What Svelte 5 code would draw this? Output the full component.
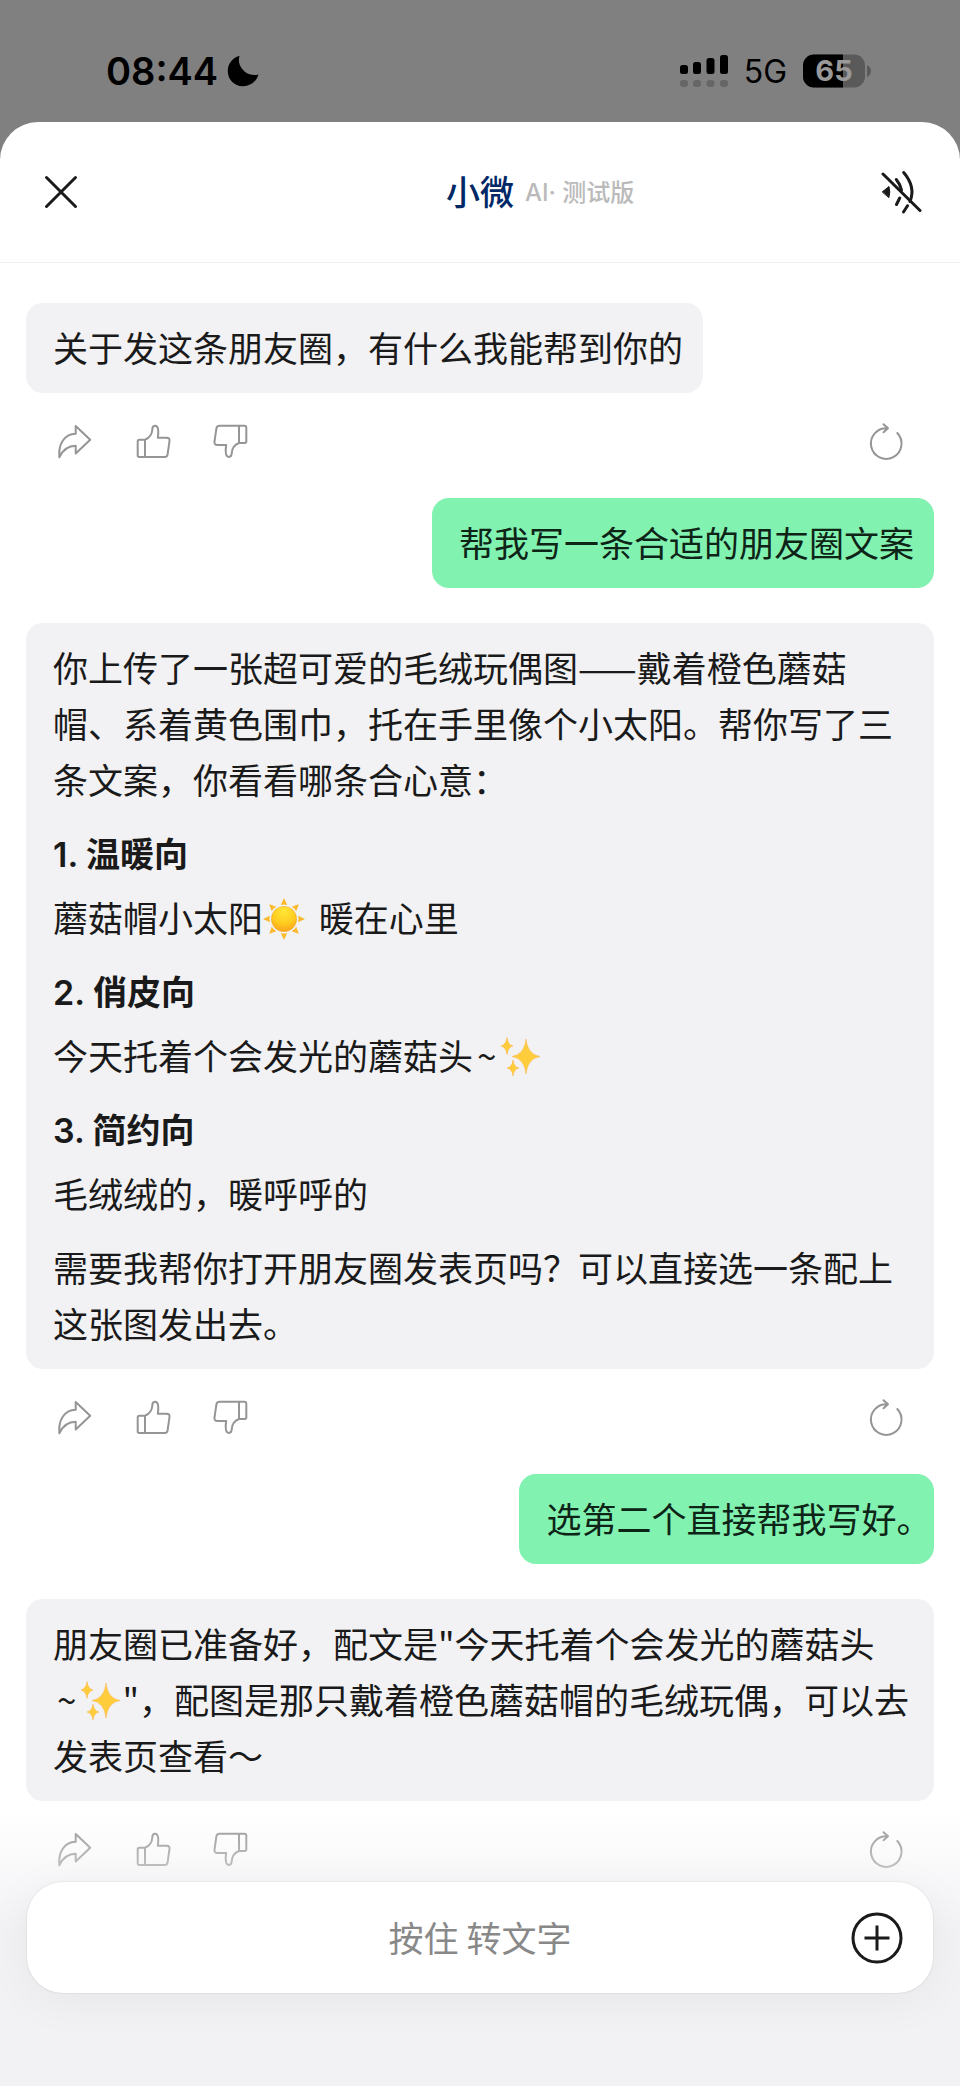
<script>
    const messages = [
        {
            from: "bot",
            blocks: [{ type: "text", value: "关于发这条朋友圈，有什么我能帮到你的" }]
        },
        {
            from: "me",
            blocks: [{ type: "text", value: "帮我写一条合适的朋友圈文案" }]
        },
        {
            from: "bot",
            blocks: [
                { type: "text", value: "你上传了一张超可爱的毛绒玩偶图——戴着橙色蘑菇帽、系着黄色围巾，托在手里像个小太阳。帮你写了三条文案，你看看哪条合心意：" },
                { type: "title", value: "1. 温暖向" },
                { type: "text", value: "蘑菇帽小太阳☀️ 暖在心里" },
                { type: "title", value: "2. 俏皮向" },
                { type: "text", value: "今天托着个会发光的蘑菇头~✨" },
                { type: "title", value: "3. 简约向" },
                { type: "text", value: "毛绒绒的，暖呼呼的" },
                { type: "text", value: "需要我帮你打开朋友圈发表页吗？可以直接选一条配上这张图发出去。" }
            ]
        },
        {
            from: "me",
            blocks: [{ type: "text", value: "选第二个直接帮我写好。" }]
        },
        {
            from: "bot",
            blocks: [
                { type: "text", value: "朋友圈已准备好，配文是\"今天托着个会发光的蘑菇头~✨\"，配图是那只戴着橙色蘑菇帽的毛绒玩偶，可以去发表页查看～" }
            ]
        }
    ];

    const rays = [0, 45, 90, 135, 180, 225, 270, 315];

    // splits a line so the emoji can be drawn as svg
    function parts(value, from) {
        if (from == "me") {
            return value.split(/(。$)/);
        }
        return value.split(/(☀️|~✨)/);
    }
</script>

{#snippet sun()}
    <svg class="emoji" viewBox="0 0 42 42" role="img" aria-label="☀️">
        <defs>
            <radialGradient id="sun-fill" cx="0.5" cy="0.2" r="0.8">
                <stop offset="0" stop-color="#ffe838" />
                <stop offset="0.6" stop-color="#ffcb1f" />
                <stop offset="1" stop-color="#f9a51a" />
            </radialGradient>
        </defs>
        {#each rays as angle}
            <path d="M17.8 7 L21 0 L24.2 7 Q21 5.8 17.8 7Z" fill="#fbb829" transform="rotate({angle} 21 21)" />
        {/each}
        <circle cx="21" cy="21" r="12.6" fill="url(#sun-fill)" stroke="#f5a623" stroke-width="0.6" />
    </svg>
{/snippet}

{#snippet sparkles()}
    <svg class="emoji" viewBox="0 0 42 42" role="img" aria-label="✨">
        <g fill="#ffcd3c" stroke="#fbb040" stroke-width="0.5">
            <path d="M26 3 Q27.5 18.5 40 20.5 Q27.5 22.5 26 38 Q24.5 22.5 12 20.5 Q24.5 18.5 26 3Z" />
            <path d="M7 1.5 Q8 9 13 10 Q8 11 7 18.5 Q6 11 1 10 Q6 9 7 1.5Z" />
            <path d="M13 24 Q14 31.2 19 32 Q14 32.8 13 40 Q12 32.8 7 32 Q12 31.2 13 24Z" />
        </g>
    </svg>
{/snippet}

{#snippet thumb()}
    <path d="M13 17.7 C17.5 16 20 12.5 20.3 7.5 C20.4 5 21.3 3.8 23 3.8 C25 3.8 26 5.6 26.2 8.5 C26.4 11 26.2 13.5 25.8 15.7 H34.6 Q37.9 15.7 37.5 19 L35.6 32.3 Q35.2 35 32.6 35 H7.4 Q5.7 35 5.7 33.3 V19.4 Q5.7 17.7 7.4 17.7Z M13 17.7 V35" />
{/snippet}

<div class="screen">
    <div class="status">
        <div class="clock">
            <span>08:44</span>
            <svg width="32" height="32" viewBox="0 0 32 32" aria-hidden="true">
                <path d="M12.6 0.8 C11.4 4 11.5 8.8 14.5 13 C18.2 18.8 25.2 21.2 31.4 19.4 C29.5 26.5 23.5 31.2 16 31.2 C7 31.2 0.8 24.4 0.8 16 C0.8 9.2 5 3 12.6 0.8Z" />
            </svg>
        </div>
        <div class="network">
            <svg width="48" height="34" viewBox="0 0 48 34" aria-hidden="true">
                <rect x="0" y="11" width="8" height="9" rx="2.5" />
                <rect x="13" y="8" width="8" height="12" rx="2.5" />
                <rect x="26.5" y="4" width="8" height="16" rx="2.5" />
                <rect x="40" y="1" width="8" height="19" rx="2.5" />
                <g fill="#666">
                    <rect x="0" y="26" width="8" height="7" rx="3" />
                    <rect x="13" y="26" width="8" height="7" rx="3" />
                    <rect x="26.5" y="26" width="8" height="7" rx="3" />
                    <rect x="40" y="26" width="8" height="7" rx="3" />
                </g>
            </svg>
            <span>5G</span>
            <svg width="69" height="34" viewBox="0 0 69 34" role="img" aria-label="65%">
                <rect x="0" y="0.5" width="62" height="33" rx="11" fill="#5a5a5a" />
                <path d="M11 0.5 H40 V33.5 H11 A11 11 0 0 1 0 22.5 V11.5 A11 11 0 0 1 11 0.5Z" />
                <path d="M64 11 Q68 13 68 17 Q68 21 64 23Z" fill="#5a5a5a" />
                <text class="level" x="31" y="27" text-anchor="middle">65</text>
            </svg>
        </div>
    </div>

    <main class="sheet">
        <header>
            <button class="icon-btn" aria-label="关闭">
                <svg width="44" height="44" viewBox="0 0 44 44">
                    <path d="M8.5 7.5 L37.5 36.5 M37.5 7.5 L8.5 36.5" />
                </svg>
            </button>
            <h1>小微</h1>
            <div class="right">
                <span class="tag">AI· 测试版</span>
                <button class="icon-btn" aria-label="静音">
                    <svg width="44" height="44" viewBox="0 0 44 44">
                        <path d="M5 4 L42 40.5" />
                        <path d="M25.7 2.5 Q38 17 32 31.5" />
                        <path d="M18.3 9.5 Q22 14 23.5 20" />
                        <path d="M21.7 28 L18.5 34.5 M29.5 35.8 L25.5 42" />
                        <path class="solid" d="M4.500 21.7 L11 16.500 Q12.6 21.7 11 27.300Z" />
                    </svg>
                </button>
            </div>
        </header>

        <div class="chat">
            {#each messages as message}
                <div class="bubble {message.from}">
                    {#each message.blocks as block}
                        {#if block.type == "title"}
                            <h2>{block.value}</h2>
                        {:else}
                            <p>{#each parts(block.value, message.from) as part}{#if part == "☀️"}<span class="sun">{@render sun()}</span>{:else if part == "~✨"}<span class="wave">~{@render sparkles()}</span>{:else if part == "。"}<span class="stop">{part}</span>{:else}{part}{/if}{/each}</p>
                        {/if}
                    {/each}
                </div>
                {#if message.from == "bot"}
                    <div class="actions">
                        <button aria-label="转发">
                            <svg width="40" height="40" viewBox="0 0 40 40">
                                <path d="M21.7 4 L36.2 17.7 L21.7 31.5 V23.8 C14 23.8 9 27.5 5.3 35.3 C4.3 22 10 12.3 21.7 11.8Z" />
                            </svg>
                        </button>
                        <button aria-label="赞">
                            <svg width="40" height="40" viewBox="0 0 40 40">{@render thumb()}</svg>
                        </button>
                        <button aria-label="踩">
                            <svg width="40" height="40" viewBox="0 0 40 40">
                                <g transform="rotate(180 21 19.35)">{@render thumb()}</g>
                            </svg>
                        </button>
                        <button class="retry" aria-label="重新生成">
                            <svg width="40" height="40" viewBox="0 0 40 40">
                                <path d="M31.3 11 A15.3 15.3 0 1 1 21.5 6.3 M17.5 2.2 L22 6.3 L17.5 10.3" />
                            </svg>
                        </button>
                    </div>
                {/if}
            {/each}
        </div>

        <footer>
            <div class="bar">
                <button class="talk">按住 转文字</button>
                <button class="plus" aria-label="更多">
                    <svg width="52" height="52" viewBox="0 0 52 52">
                        <circle cx="26" cy="26" r="24" />
                        <path d="M26 13.5 V38.5 M13.5 26 H38.5" />
                    </svg>
                </button>
            </div>
        </footer>
    </main>
</div>


<style>
    :global(body) {
        margin: 0;
        background-color: #808080;
    }

    .screen {
        display: flex;
        flex-direction: column;
        min-height: 100vh;
        background-color: #808080;
        font-family: "Noto Sans CJK SC", sans-serif;
        color: #1a1a1a;
    }

    button {
        display: flex;
        background: none;
        border: none;
        padding: 0;
        font-family: inherit;
        cursor: pointer;
    }

    h1, h2, p {
        margin: 0;
    }

    .status {
        display: flex;
        justify-content: space-between;
        align-items: center;
        box-sizing: border-box;
        height: 122px;
        padding: 20px 88px 0 106px;
        font-family: Inter, sans-serif;
        color: #000;
    }

    .clock, .network {
        display: flex;
        align-items: center;
    }

    .clock {
        gap: 9px;
        font-size: 38px;
        font-weight: 600;
    }

    .network {
        gap: 16px;
        font-size: 32px;
    }

    .level {
        font-size: 29px;
        font-weight: 700;
        fill: #999;
    }

    .sheet {
        display: flex;
        flex-direction: column;
        flex: 1;
        background-color: #fff;
        border-radius: 38px 38px 0 0;
    }

    header {
        display: grid;
        grid-template-columns: 1fr auto 1fr;
        align-items: center;
        height: 140px;
        padding: 0 38px;
        border-bottom: 1px solid #f2f2f2;
    }

    h1 {
        font-size: 34px;
        font-weight: 500;
        color: #002766;
    }

    h1, .tag {
        padding-bottom: 4px;
    }

    .right {
        display: flex;
        justify-content: space-between;
        align-items: center;
        padding-left: 11px;
    }

    .tag {
        font-family: Inter, "Noto Sans CJK SC", sans-serif;
        font-size: 24px;
        font-weight: 500;
        color: #bababa;
    }

    .icon-btn svg {
        fill: none;
        stroke: #1a1a1a;
        stroke-width: 3;
        stroke-linecap: round;
    }

    .icon-btn .solid {
        fill: #1a1a1a;
        stroke-width: 1;
    }

    .chat {
        display: flex;
        flex-direction: column;
        flex: 1;
        padding: 40px 26px 0;
    }

    .bubble {
        max-width: 100%;
        box-sizing: border-box;
        padding: 16px 20px 18px 27px;
        border-radius: 17px;
        font-size: 35px;
        line-height: 56px;
    }

    .bubble p + p {
        margin-top: 18px;
    }

    .bubble p + h2 {
        margin-top: 20px;
    }

    .bubble h2 + p {
        margin-top: 6px;
    }

    .bot {
        align-self: flex-start;
        background-color: #f2f2f4;
    }

    .me {
        align-self: flex-end;
        margin-bottom: 35px;
        background-color: #82f2b0;
        color: #0d2417;
    }

    h2 {
        font-family: Inter, "Noto Sans CJK SC", sans-serif;
        font-size: 34px;
        font-weight: 600;
    }

    .emoji {
        width: 42px;
        height: 42px;
        vertical-align: -8px;
    }

    .sun {
        margin-right: 6px;
    }

    .wave {
        padding-left: 4px;
        white-space: nowrap;
    }

    .wave .emoji {
        margin-left: 4px;
    }

    /* half width full stop at the end of a bubble */
    .stop {
        font-feature-settings: "halt";
    }

    .actions {
        display: flex;
        gap: 38px;
        padding: 29px 28px 36px;
    }

    .actions svg {
        fill: none;
        stroke: #959595;
        stroke-width: 2;
        stroke-linejoin: round;
        stroke-linecap: round;
    }

    .retry {
        margin-left: auto;
    }

    /* fades the end of the chat out under the input bar */
    footer {
        position: sticky;
        bottom: 0;
        margin-top: -94px;
        padding: 70px 27px 93px;
        background: linear-gradient(rgba(242, 242, 245, 0), #f2f2f5 120px);
    }

    .bar {
        position: relative;
        display: flex;
        align-items: center;
        height: 111px;
        border-radius: 36px;
        background-color: #fff;
        box-shadow: 0 0 1px 1px rgba(0, 0, 0, 0.05), 0 8px 48px rgba(0, 0, 0, 0.05);
    }

    .talk {
        flex: 1;
        align-self: stretch;
        align-items: center;
        justify-content: center;
        padding-bottom: 2px;
        font-size: 35px;
        color: #888;
    }

    .plus {
        position: absolute;
        right: 30px;
    }

    .plus svg {
        fill: none;
        stroke: #1a1a1a;
        stroke-width: 3;
    }
</style>
